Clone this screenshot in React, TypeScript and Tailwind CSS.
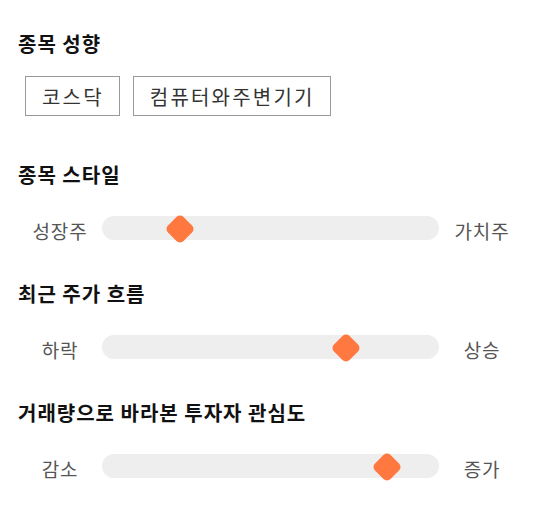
import React from "react";

interface SliderRow {
  title: string;
  left: string;
  right: string;
  value: number; // thumb centre, px from track start
}

const sliders: SliderRow[] = [
  { title: "종목 스타일", left: "성장주", right: "가치주", value: 78 },
  { title: "최근 주가 흐름", left: "하락", right: "상승", value: 244 },
  { title: "거래량으로 바라본 투자자 관심도", left: "감소", right: "증가", value: 285 },
];

const tags = ["코스닥", "컴퓨터와주변기기"];

const font = { fontFamily: '"Noto Sans CJK KR", "Noto Sans", sans-serif' };

const Slider = ({ row, first }: { row: SliderRow; first: boolean }) => (
  <div className={first ? "mt-[45px]" : "mt-[38px]"}>
    <h2 className="h-[28px] text-[20px] leading-[28px] font-bold tracking-[1px] text-[#111]">
      {row.title}
    </h2>

    {/* Track */}
    <div className="mt-[25px] flex h-[28px] items-center">
      <span className="w-[84px] pt-[6px] text-center text-[19px] leading-[28px] tracking-[0.8px] text-[#555]">
        {row.left}
      </span>
      <div className="relative h-[24px] w-[337px] rounded-full bg-[#eeeeee]">
        <div
          className="absolute top-[2px] h-[22px] w-[22px] -translate-x-1/2 rotate-45 rounded-[5px] bg-[#ff783f]"
          style={{ left: row.value }}
        />
      </div>
      <span className="w-[86px] pt-[6px] text-center text-[19px] leading-[28px] tracking-[0.8px] text-[#555]">
        {row.right}
      </span>
    </div>
  </div>
);

export default function App() {
  return (
    <div className="min-h-[511px] w-[540px] bg-white pl-[18px] pt-[30px]" style={font}>
      {/* 종목 성향 */}
      <h2 className="h-[28px] text-[20px] leading-[28px] font-bold tracking-[1px] text-[#111]">
        종목 성향
      </h2>
      <div className="ml-[7px] mt-[18px] flex gap-[13px]">
        {tags.map((t) => (
          <div
            key={t}
            className="flex h-[40px] items-center border border-[#999] pl-[16px] pr-[15px] pt-[2px] text-[20px] tracking-[2.2px] text-[#333]"
          >
            {t}
          </div>
        ))}
      </div>

      {sliders.map((s, i) => (
        <Slider key={s.title} row={s} first={i === 0} />
      ))}
    </div>
  );
}
